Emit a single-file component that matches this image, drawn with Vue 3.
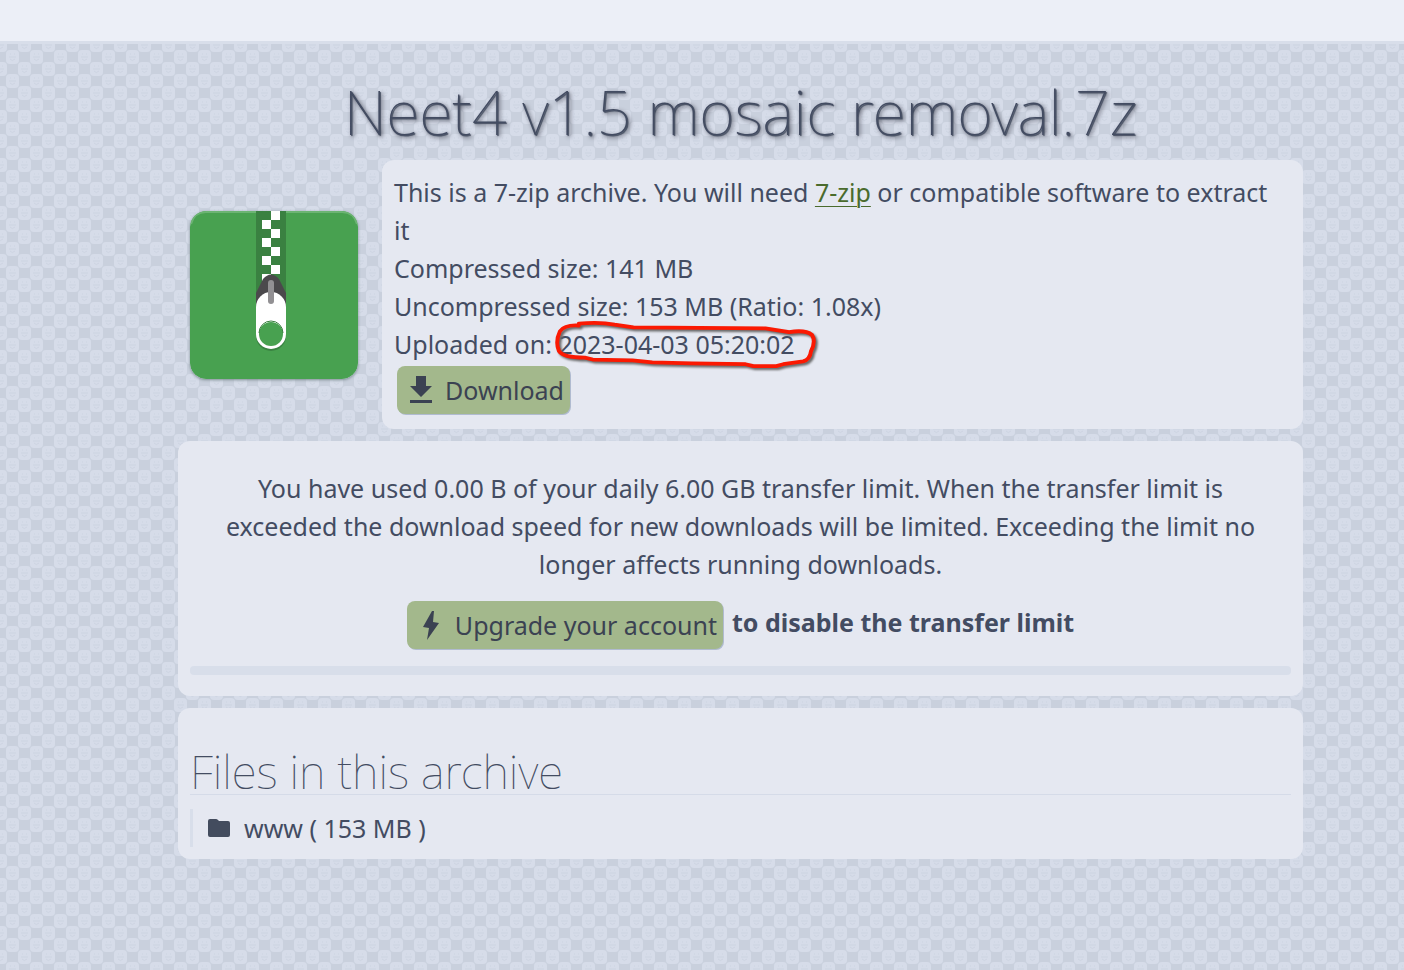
<script setup>
import { ref } from "vue";

const title = "Neet4 v1.5 mosaic removal.7z";
const uploaded = "2023-04-03 05:20:02";
const transferUsed = ref(0);

const files = ref([{ name: "www", size: "153 MB" }]);
</script>

<template>
  <div class="page">
    <header class="topbar"></header>

    <main class="content">
      <h1 class="title">{{ title }}</h1>

      <section class="summary">
        <svg class="archive-icon" viewBox="0 0 168 168" aria-hidden="true">
          <rect width="168" height="168" rx="16" fill="#48a150" />
          <path
            d="M1 13C3 5 8 1 16 1H152C160 1 165 5 167 13"
            fill="none"
            stroke="#6cb473"
            stroke-width="2"
          />
          <rect x="66" width="30" height="90" fill="#3a8141" />
          <g fill="#fff">
            <rect x="81" y="0" width="9" height="9" />
            <rect x="72" y="9" width="9" height="9" />
            <rect x="81" y="18" width="9" height="9" />
            <rect x="72" y="27" width="9" height="9" />
            <rect x="81" y="36" width="9" height="9" />
            <rect x="72" y="45" width="9" height="9" />
            <rect x="81" y="54" width="9" height="9" />
            <rect x="72" y="63" width="9" height="9" />
          </g>
          <path d="M66 96V82L73 68Q81 59 89 68L96 82V96Z" fill="#4b494c" />
          <path
            fill="#327039"
            opacity="0.6"
            d="M66 97a15 15 0 0 1 30 0v28a15 15 0 0 1-30 0Z"
          />
          <path
            fill="#fff"
            d="M66 96a15 15 0 0 1 30 0v27a15 15 0 0 1-30 0Z"
          />
          <circle cx="81" cy="123" r="12" fill="#48a150" />
          <path d="M69 122a12 12 0 0 1 24 0" fill="none" stroke="#39803f" stroke-width="1" />
          <rect x="78" y="69" width="6" height="24" rx="3" fill="#929093" />
        </svg>

        <div class="box description">
          <div>
            This is a 7-zip archive. You will need
            <a href="#7-zip">7-zip</a> or compatible software to extract it
          </div>
          <div>Compressed size: 141 MB</div>
          <div>Uncompressed size: 153 MB (Ratio: 1.08x)</div>
          <div>
            Uploaded on:
            <span class="date">
              {{ uploaded }}
              <svg
                class="marker"
                viewBox="0 0 264 52"
                preserveAspectRatio="none"
                aria-hidden="true"
              >
                <path
                  d="M24 7Q10 6 5 13Q0 24 4 34Q8 41 30 41L38 43L78 44L98 46L138 47L192 48L200 50H223L230 48L250 45Q257 43 258 34Q263 24 259 17Q252 11 236 14L212 10L79 9L60 6Q45 3 24 5"
                  fill="none"
                  stroke="#fb1902"
                  stroke-width="4"
                  stroke-linejoin="round"
                  stroke-linecap="round"
                />
              </svg>
            </span>
          </div>
          <button class="button download" type="button">
            <svg class="icon" viewBox="0 0 32 32" aria-hidden="true">
              <path d="M11 2H21V12H27L16 23L5 12H11ZM5 26H27V29H5Z" />
            </svg>
            <span>Download</span>
          </button>
        </div>
      </section>

      <section class="box limit">
        <p>
          You have used 0.00 B of your daily 6.00 GB transfer limit. When the
          transfer limit is exceeded the download speed for new downloads will
          be limited. Exceeding the limit no longer affects running downloads.
        </p>
        <div class="upgrade">
          <button class="button" type="button">
            <svg class="icon" viewBox="0 0 32 32" aria-hidden="true">
              <path d="M17 2L8 18L14 19L12 31L24 14L18 13L19 2Z" />
            </svg>
            <span>Upgrade your account</span>
          </button>
          <strong>to disable the transfer limit</strong>
        </div>
        <div class="progress">
          <div class="progress-value" :style="{ width: transferUsed + '%' }"></div>
        </div>
      </section>

      <section class="box files">
        <h2>Files in this archive</h2>
        <ul>
          <li v-for="file in files" :key="file.name">
            <svg class="folder" viewBox="0 0 22 18" aria-hidden="true">
              <path d="M2 0H8Q9 0 10 1L11 2H20Q22 2 22 4V16Q22 18 20 18H2Q0 18 0 16V2Q0 0 2 0Z" />
            </svg>
            <span>{{ file.name }} ( {{ file.size }} )</span>
          </li>
        </ul>
      </section>
    </main>
  </div>
</template>

<style>
body {
  margin: 0;
  background: #cad0dd;
}
</style>

<style scoped>
.page {
  min-height: 100vh;
  color: #434c62;
  font-family: "Noto Sans", sans-serif;
  font-size: 25px;
  line-height: 38px;
  background-color: #c9d0dd;
  background-image: url("data:image/svg+xml,%3Csvg xmlns='http://www.w3.org/2000/svg' width='24' height='24'%3E%3Cdefs%3E%3Cg id='f'%3E%3Crect width='13' height='14' rx='4' fill='%23d6dce9'/%3E%3Cpath d='M3 7h7M4 4h1M8 4h1M4 9q2 3 5 0' stroke='%23cdd4e2' fill='none'/%3E%3C/g%3E%3C/defs%3E%3Cuse href='%23f' x='6' y='2'/%3E%3Cuse href='%23f' x='18' y='14'/%3E%3Cuse href='%23f' x='-6' y='14'/%3E%3Cuse href='%23f' x='18' y='-10'/%3E%3Cuse href='%23f' x='-6' y='-10'/%3E%3C/svg%3E");
}

.topbar {
  height: 41px;
  background: #eceff7;
  border-bottom: 3px solid #d8deea;
}

.content {
  padding: 32px 101px 40px 178px;
}

.title {
  margin: 0 0 12px;
  font-size: 61px;
  font-weight: 100;
  line-height: 72px;
  text-align: center;
  text-shadow:
    1px 1px 1px #434c5e,
    2px 2px 4px #3b3b48;
}

.summary {
  display: flex;
  align-items: center;
  gap: 24px;
  padding-left: 12px;
}

.archive-icon {
  flex: none;
  width: 168px;
  height: 168px;
  border-radius: 16px;
  box-shadow: 0 1px 3px #7d8d92;
}

.box {
  padding: 12px;
  background: #e5e8f1;
  border-radius: 12px;
}

.description {
  flex: 1;
  padding: 13px 18px 12px 12px;
}

.description a {
  color: #4a6b2d;
  text-decoration-thickness: 1px;
  text-underline-offset: 4px;
}

.date {
  position: relative;
}

.marker {
  position: absolute;
  top: -8px;
  left: -3px;
  width: 262px;
  height: 49px;
  overflow: visible;
  filter: drop-shadow(2px 2px 1px #666);
}

.button {
  display: inline-flex;
  align-items: center;
  gap: 8px;
  height: 48px;
  padding: 0 6px 0 8px;
  color: #3b4252;
  font: inherit;
  background: #a3b88c;
  border: none;
  border-radius: 8px;
  box-shadow: 1px 1px 0 #b0bbd0;
  cursor: pointer;
}

.download {
  display: flex;
  margin: 3px;
}

.icon {
  flex: none;
  width: 32px;
  height: 32px;
  fill: #3b4252;
}

.limit {
  margin-top: 12px;
  padding-bottom: 21px;
  text-align: center;
}

.limit p {
  margin: 16px 0 18px;
  padding: 0 20px;
}

.upgrade {
  display: flex;
  justify-content: center;
  gap: 9px;
}

.upgrade strong {
  line-height: 43px;
}

.progress {
  height: 9px;
  margin-top: 17px;
  overflow: hidden;
  background: #d8deea;
  border-radius: 4px;
}

.progress-value {
  height: 100%;
  background: #a3b88c;
}

.files {
  margin-top: 12px;
}

.files h2 {
  margin: 28px 0 14px;
  font-size: 46px;
  font-weight: 100;
  line-height: 46px;
  border-bottom: 1px solid #d5dbe8;
}

.files ul {
  margin: 0;
  padding: 0;
  list-style: none;
}

.files li {
  display: flex;
  align-items: center;
  gap: 14px;
  padding-left: 15px;
  border-left: 3px solid #d8deea;
}

.folder {
  width: 22px;
  height: 18px;
  fill: #434c5e;
}
</style>
